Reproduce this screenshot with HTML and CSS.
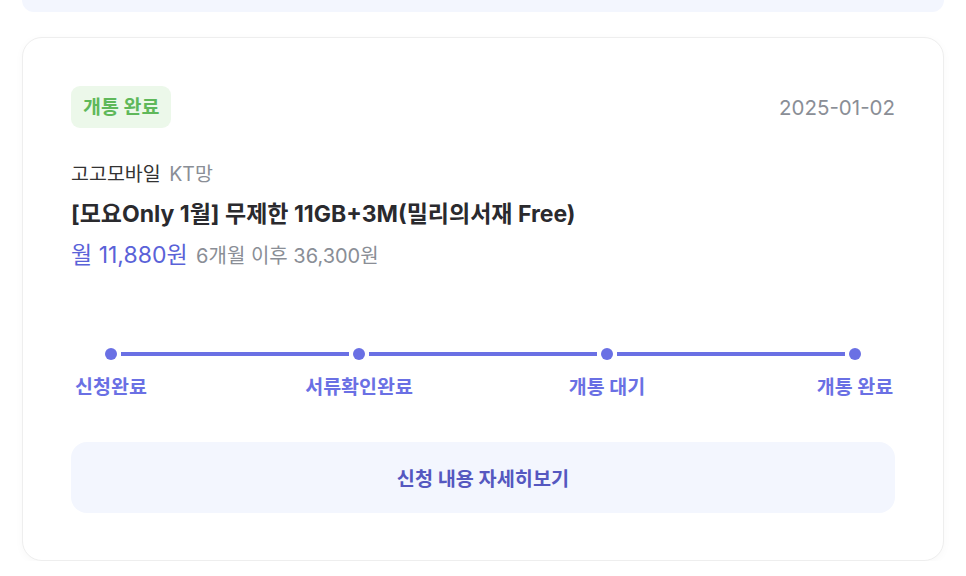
FILE: index.html
```html
<!DOCTYPE html>
<html lang="ko">
<head>
  <meta charset="UTF-8">
  <title>신청 내역</title>
  <link rel="stylesheet" href="styles.css">
</head>
<body>
  <div class="list">
    <div class="card-prev"></div>

    <div class="card">
      <div class="card-head">
        <span class="badge">개통 완료</span>
        <span class="date">2025-01-02</span>
      </div>

      <div class="plan">
        <div class="carrier">고고모바일 <span class="network">KT망</span></div>
        <div class="plan-name">[모요Only 1월] 무제한 11GB+3M(밀리의서재 Free)</div>
        <div class="price">
          <span class="price-now">월 11,880원</span>
          <span class="price-after">6개월 이후 36,300원</span>
        </div>
      </div>

      <div class="steps">
        <div class="step">
          <span class="dot"></span>
          <span class="step-label">신청완료</span>
        </div>
        <div class="line"></div>
        <div class="step">
          <span class="dot"></span>
          <span class="step-label">서류확인완료</span>
        </div>
        <div class="line"></div>
        <div class="step">
          <span class="dot"></span>
          <span class="step-label">개통 대기</span>
        </div>
        <div class="line"></div>
        <div class="step">
          <span class="dot"></span>
          <span class="step-label">개통 완료</span>
        </div>
      </div>

      <button class="detail-btn">신청 내용 자세히보기</button>
    </div>
  </div>
</body>
</html>
```

FILE: styles.css
```css
body {
  margin: 0;
  background-color: #fff;
  font-family: Inter, "Noto Sans CJK KR", sans-serif;
  color: #222;
}

.list {
  width: 922px;
  margin-left: 22px;
  display: flex;
  flex-direction: column;
  gap: 25px;
}

.card-prev {
  height: 12px;
  background-color: #f3f6fe;
  border-radius: 0 0 16px 16px;
}

.card {
  box-sizing: border-box;
  height: 524px;
  padding: 48px 48px 0;
  background-color: white;
  border: 1px solid #eeeeee;
  border-radius: 20px;
  box-shadow: 0 2px 8px rgba(0, 0, 0, 0.03);
}

.card-head {
  display: flex;
  justify-content: space-between;
  align-items: center;
}

.badge {
  display: inline-block;
  height: 42px;
  line-height: 42px;
  padding: 0 12px;
  background-color: #ecf8ea;
  color: #5fb85a;
  font-size: 19.5px;
  font-weight: 700;
  border-radius: 9px;
}

.date {
  font-size: 20.5px;
  color: #8a8e96;
}

.plan {
  margin-top: 32px;
}

.carrier {
  font-size: 19.5px;
  line-height: 28px;
  color: #333;
}

.network {
  margin-left: 3px;
  color: #8a8e96;
}

.plan-name {
  margin-top: 11px;
  font-size: 23px;
  font-weight: 700;
  line-height: 30px;
  color: #2a2a2e;
}

.price {
  margin-top: 11px;
  line-height: 30px;
}

.price-now {
  font-size: 23px;
  color: #5a62d8;
}

.price-after {
  margin-left: 4px;
  font-size: 20px;
  color: #8a8e96;
}

.steps {
  display: flex;
  align-items: flex-start;
  margin-top: 76px;
}

.step {
  width: 80px;
  display: flex;
  flex-direction: column;
  align-items: center;
}

.dot {
  width: 12px;
  height: 12px;
  border-radius: 50%;
  background-color: #6a70e4;
}

.step-label {
  margin-top: 13px;
  font-size: 19.5px;
  font-weight: 700;
  line-height: 28px;
  white-space: nowrap;
  color: #6a70e4;
}

.line {
  flex: 1;
  height: 4px;
  margin: 4px -30px 0;
  background-color: #6a70e4;
}

.detail-btn {
  display: block;
  width: 100%;
  height: 71px;
  margin-top: 41px;
  border: none;
  border-radius: 16px;
  background-color: #f3f6fe;
  font-family: inherit;
  font-size: 19.7px;
  font-weight: 700;
  color: #5558c0;
  cursor: pointer;
}
```
